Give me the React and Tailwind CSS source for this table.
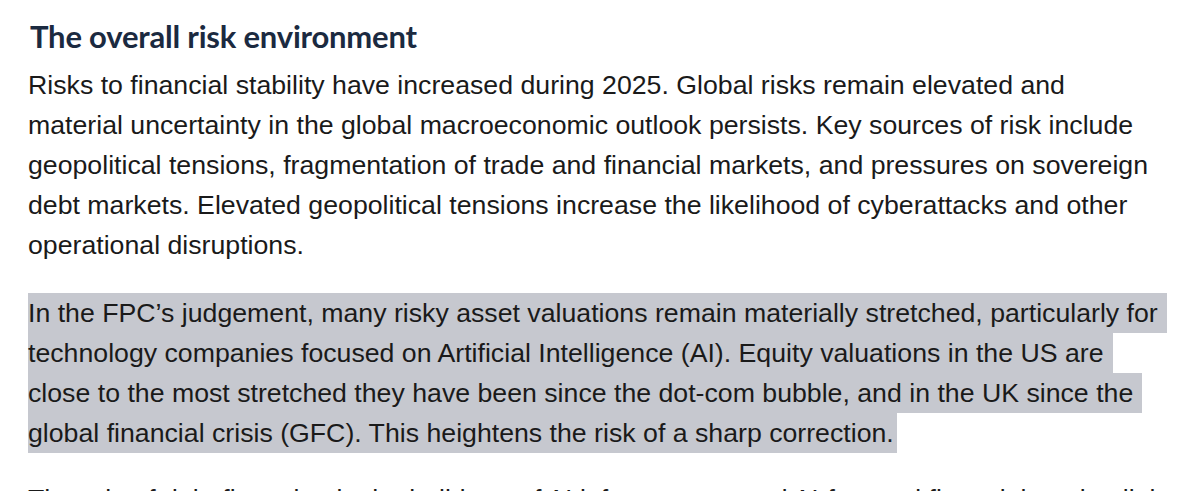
import React from "react";

const intro = [
  "Risks to financial stability have increased during 2025. Global risks remain elevated and",
  "material uncertainty in the global macroeconomic outlook persists. Key sources of risk include",
  "geopolitical tensions, fragmentation of trade and financial markets, and pressures on sovereign",
  "debt markets. Elevated geopolitical tensions increase the likelihood of cyberattacks and other",
  "operational disruptions.",
];

const highlighted = [
  "In the FPC’s judgement, many risky asset valuations remain materially stretched, particularly for",
  "technology companies focused on Artificial Intelligence (AI). Equity valuations in the US are",
  "close to the most stretched they have been since the dot-com bubble, and in the UK since the",
  "global financial crisis (GFC). This heightens the risk of a sharp correction.",
];

const App = () => {
  return (
    <div className="w-[1200px] h-[491px] overflow-hidden bg-white">
      <div className="pl-[28px] pt-[16px]">
        <h2 className="font-['Lato',sans-serif] font-bold text-[31px] leading-[40px] tracking-[-0.2px] text-[#1b2a40] pl-[2px]">
          The overall risk environment
        </h2>

        {/* body copy, lines fixed as in the page */}
        <div className="mt-[9px] font-['Liberation_Sans',Arial,sans-serif] text-[26.7px] leading-[40px] text-[#1a1a1a] whitespace-nowrap">
          <p>
            {intro.map((line) => (
              <span key={line} className="block">{line}</span>
            ))}
          </p>

          <p className="mt-[28px]">
            {highlighted.map((line, i) => (
              <span
                key={line}
                className={
                  "block w-fit bg-[#c6c8cf] " +
                  (i < highlighted.length - 1 ? "pr-[9px]" : "pr-[3px]")
                }
              >
                {line}
              </span>
            ))}
          </p>

          <p className="mt-[26px]">
            The role of debt financing in the build-out of AI infrastructure and AI-focused financial market linkages
          </p>
        </div>
      </div>
    </div>
  );
};

export default App;
